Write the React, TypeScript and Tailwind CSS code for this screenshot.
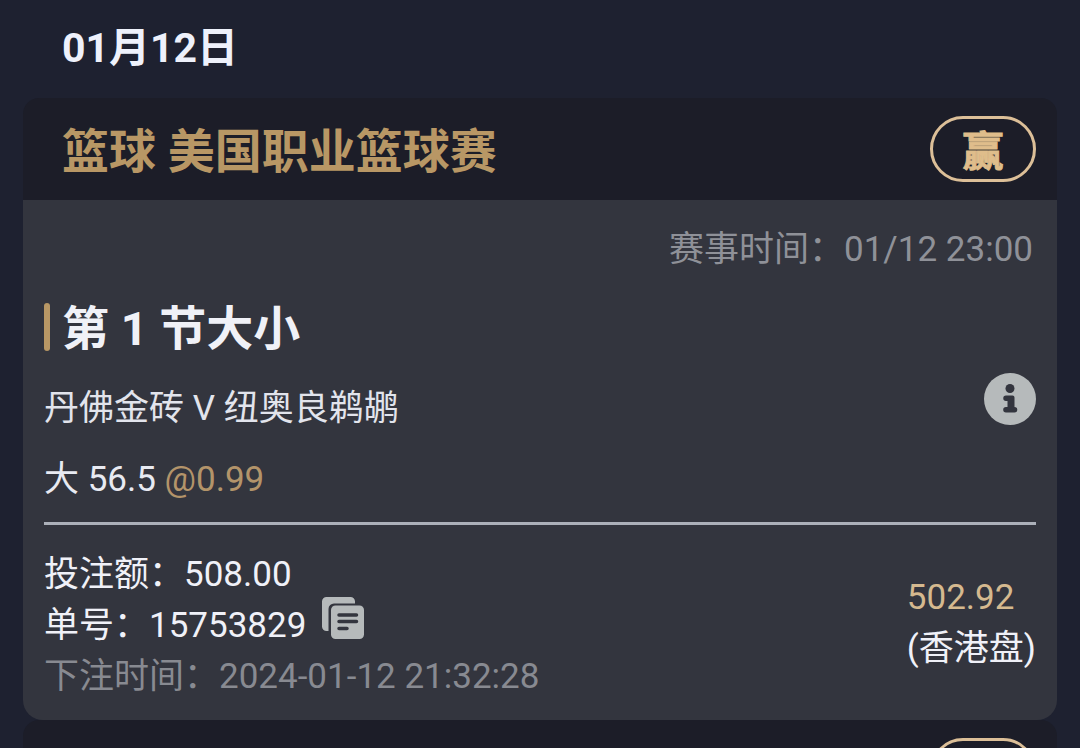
import React from 'react'

interface BetRecord {
  league: string
  result: string
  matchTime: string
  market: string
  teams: string
  pick: string
  odds: string
  stake: string
  orderNo: string
  placedAt: string
  payout: string
  oddsType: string
}

const record: BetRecord = {
  league: '篮球 美国职业篮球赛',
  result: '赢',
  matchTime: '01/12 23:00',
  market: '第 1 节大小',
  teams: '丹佛金砖 V 纽奥良鹈鹕',
  pick: '大 56.5',
  odds: '@0.99',
  stake: '508.00',
  orderNo: '15753829',
  placedAt: '2024-01-12 21:32:28',
  payout: '502.92',
  oddsType: '(香港盘)'
}

function InfoIcon() {
  return (
    <svg viewBox="0 0 52 52" className="size-[52px]" aria-hidden="true">
      <circle cx="26" cy="26" r="26" fill="#b6babb" />
      <circle cx="26" cy="15.5" r="4.5" fill="#33353e" />
      <path
        d="M22 22.5h6.500a2 2 0 0 1 2 2V34a2.800 2.800 0 0 1 0 5.600h-8.500a2.800 2.800 0 0 1 0-5.600h1.500v-6H22a2.750 2.750 0 0 1 0-5.500z"
        fill="#33353e"
      />
    </svg>
  )
}

function CopyIcon() {
  return (
    <svg viewBox="0 0 42 42" className="size-[42px]" aria-hidden="true">
      <path
        d="M4.5 0h24a4.500 4.500 0 0 1 4.500 4.500v2H12a5.500 5.500 0 0 0-5.500 5.500v22H4.500a4.500 4.500 0 0 1-4.500-4.500v-25a4.500 4.500 0 0 1 4.500-4.500z"
        fill="#b6babb"
      />
      <rect x="9" y="8.5" width="33" height="33.5" rx="4.5" fill="#b6babb" />
      <path
        d="M17 18h17.500M17 24.500h17.500M17 31.500h8"
        stroke="#33353e"
        strokeWidth="3.5"
        strokeLinecap="round"
      />
    </svg>
  )
}

function CardHeader({ league, result }: { league?: string; result?: string }) {
  return (
    <header className="flex h-[102px] items-center justify-between rounded-t-2xl bg-[#1c1d28] pr-[21px] pl-[39px]">
      <h2 className="pt-1.5 text-[47px] leading-[60px] font-bold text-[#b89765]">{league}</h2>
      <span className="flex h-[66px] w-[106px] items-center justify-center rounded-full border-3 border-[#dcbf98] pt-1.5 text-[41px] leading-[54px] font-bold text-[#dfbd8b] [-webkit-text-stroke:1px]">
        {result}
      </span>
    </header>
  )
}

function BetCard({ bet }: { bet: BetRecord }) {
  return (
    <article>
      <CardHeader league={bet.league} result={bet.result} />
      <div className="rounded-b-[20px] bg-[#33353e] px-[21px] pt-6 pb-[18px]">
        <p className="pr-[3px] text-right text-[#8f9198]">赛事时间：{bet.matchTime}</p>

        <div className="mt-6 flex items-start gap-3">
          <span className="mt-1 h-12 w-1.5 rounded-full bg-[#b89765]" />
          <h3 className="text-[47px] leading-[60px] font-bold text-[#f0f1f7]">{bet.market}</h3>
        </div>

        <div className="mt-6 flex h-[51px] items-start justify-between">
          <p className="text-[#e2e4ec]">{bet.teams}</p>
          <button type="button" aria-label="详情" className="-mt-2.5 cursor-pointer">
            <InfoIcon />
          </button>
        </div>

        <p className="mt-5 text-[#e8eaf2]">
          {bet.pick} <span className="text-[#b3946a]">{bet.odds}</span>
        </p>

        <hr className="mt-[17px] border-t-3 border-[#acb0b9]" />

        <div className="mt-6 flex items-center justify-between">
          <div className="text-[#f0f1f8]">
            <p>投注额：{bet.stake}</p>
            <div className="flex items-start gap-4">
              <p>单号：{bet.orderNo}</p>
              <button type="button" aria-label="复制单号" className="-mt-[3px] h-0 cursor-pointer">
                <CopyIcon />
              </button>
            </div>
            <p className="text-[#888a91]">下注时间：{bet.placedAt}</p>
          </div>
          <div className="pb-1.5 text-[#f0f1f8]">
            <p className="text-[#d5b98f]">{bet.payout}</p>
            <p>{bet.oddsType}</p>
          </div>
        </div>
      </div>
    </article>
  )
}

export default function App() {
  return (
    <main
      lang="zh-CN"
      className="h-screen overflow-hidden bg-[#1e2130] px-[23px] font-[Roboto,'Noto_Sans_CJK_SC',sans-serif] text-[35px] leading-[51px]"
    >
      <h1 className="pt-[18px] pb-5 pl-[39px] text-[41px] leading-[60px] font-bold text-[#eef1fb]">
        01月12日
      </h1>
      <BetCard bet={record} />
      <CardHeader />
    </main>
  )
}
